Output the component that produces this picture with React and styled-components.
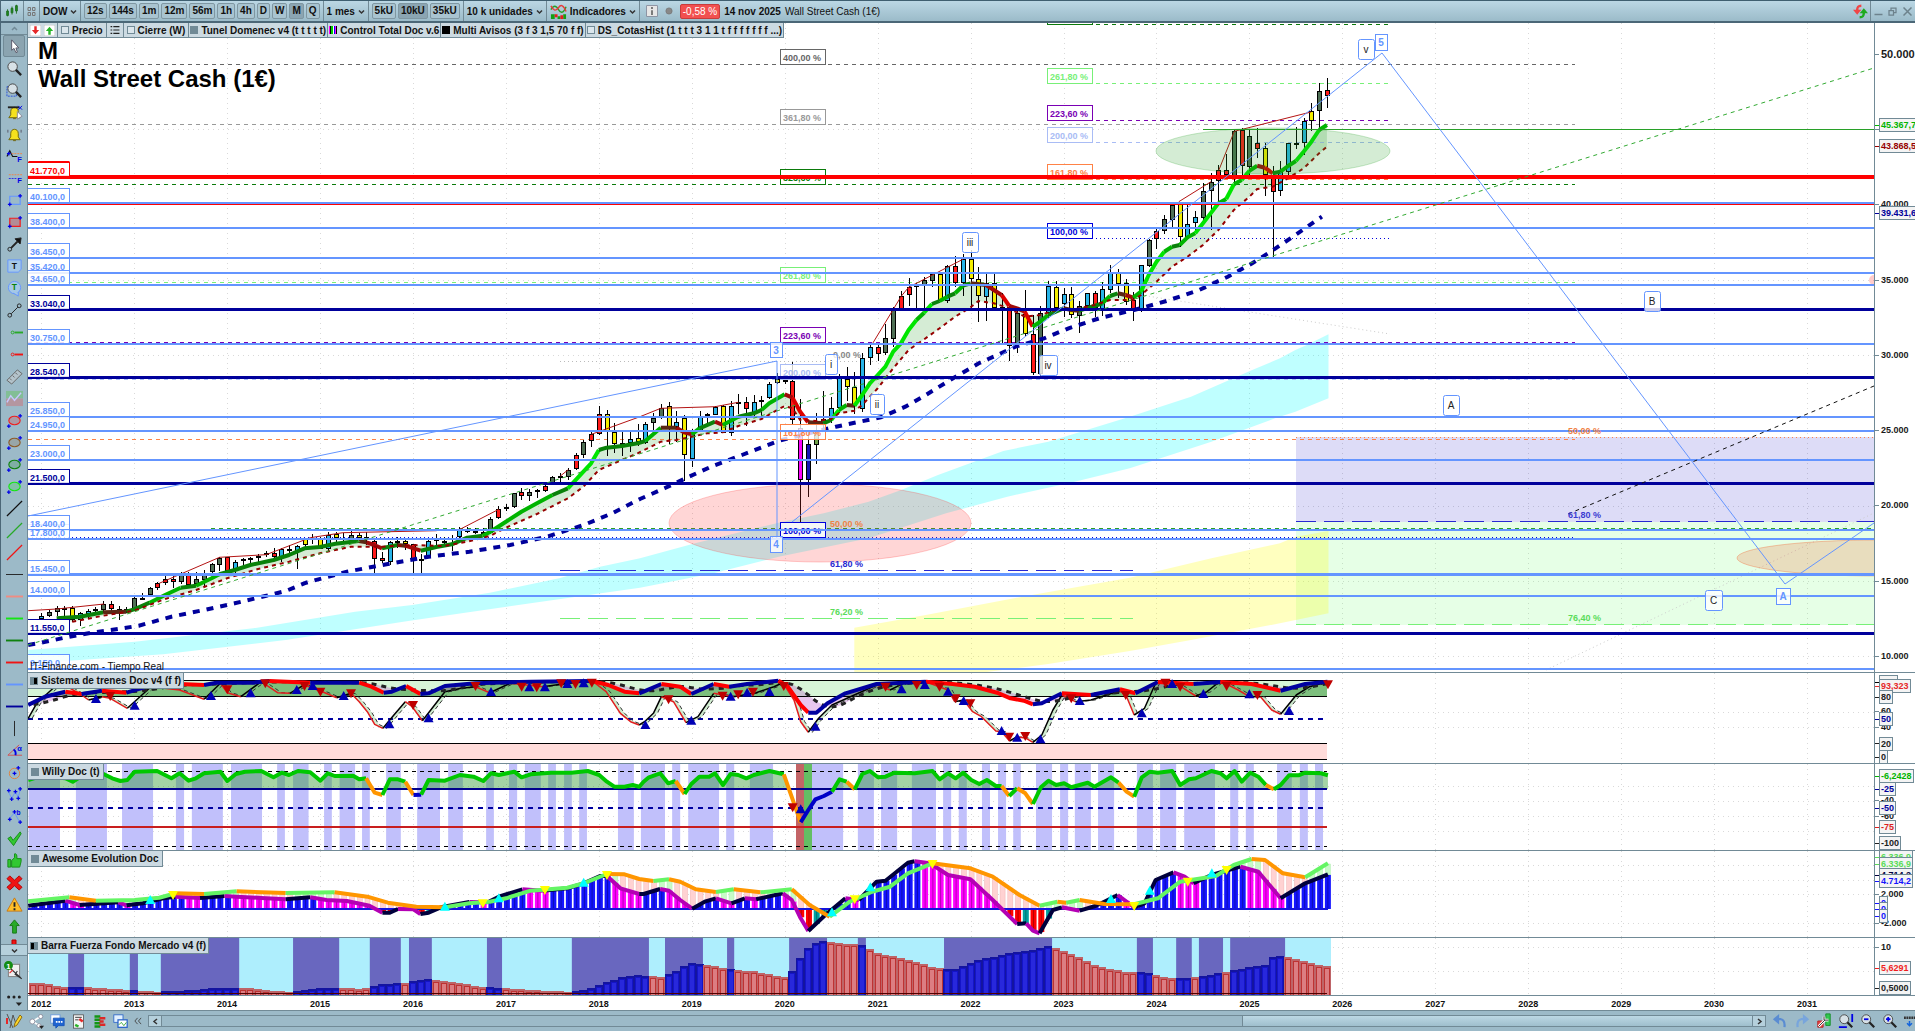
import React from "react";
import styled, { createGlobalStyle } from "styled-components";

const GlobalStyle = createGlobalStyle`
  * {
    box-sizing: border-box;
  }
  body {
    margin: 0;
    overflow: hidden;
    background: #9cbac8;
    font-family: "Liberation Sans", Arial, sans-serif;
    font-size: 10px;
    color: #111;
  }
  button, select {
    font: inherit;
    color: inherit;
    cursor: pointer;
  }
`;

const BLUE = "#6495ff";
const NAVY = "#00009b";
const EDGE = "#718a96";

/* ---------- layout ---------- */

const Page = styled.div`
  display: flex;
  flex-direction: column;
  height: 100vh;
  border-left: 1px solid #4b6777;
`;

const TopBar = styled.header`
  display: flex;
  align-items: stretch;
  height: 23px;
  flex: none;
  border-top: 1px solid #3f5f70;
  border-bottom: 2px solid #4b6777;
  background: linear-gradient(#bbd7e4, #9bbbc9);
`;

const Group = styled.div`
  display: flex;
  align-items: center;
  gap: ${(p) => p.$gap || 0}px;
  padding: 0 ${(p) => p.$pad || 3}px;
  border-right: 1px solid ${EDGE};
  white-space: nowrap;
`;

const Spacer = styled.div`
  flex: 1;
`;

const ToolButton = styled.button`
  height: 16px;
  padding: 0 2px;
  border: 1px solid #7f97a2;
  border-radius: 2px;
  background: ${(p) => (p.$active ? "#8ba5b2" : "#a9c4d0")};
  font-weight: bold;
  line-height: 12px;
`;

const Picker = styled.label`
  display: flex;
  align-items: center;
  gap: 2px;

  select {
    appearance: none;
    border: 0;
    padding: 0;
    background: none;
    font-weight: bold;
  }
`;

const Badge = styled.span`
  padding: 1px 2px;
  border: 1px solid #c83c3c;
  border-radius: 2px;
  background: #f25050;
  color: #fff;
`;

const Info = styled.div`
  display: flex;
  align-items: center;
  gap: 4px;
  padding-left: 6px;
  white-space: nowrap;
`;

const WindowButtons = styled.div`
  display: flex;
  align-items: center;
  justify-content: space-around;
  width: 44px;
`;

const Bare = styled.button`
  display: flex;
  align-items: center;
  justify-content: center;
  padding: 0;
  border: 0;
  background: none;
`;

const Body = styled.div`
  display: flex;
  flex: 1;
  min-height: 0;
`;

const Side = styled.nav`
  display: flex;
  flex-direction: column;
  width: 27px;
  flex: none;
  border-right: 1px solid ${EDGE};
  background: #9cbac8;
`;

const SideTools = styled.div`
  flex: 1;
  min-height: 0;
  overflow: hidden;
`;

const SideButton = styled(Bare)`
  width: 22px;
  height: 22px;
  margin-left: 2px;
  border: 1px solid ${(p) => (p.$active ? "#718a96" : "transparent")};
  border-radius: 2px;
  background: ${(p) => (p.$active ? "#8ba4b0" : "none")};
`;

const SideArrow = styled(Bare)`
  width: 100%;
  height: 12px;
  flex: none;
  border-bottom: 1px solid ${EDGE};
  border-top: ${(p) => (p.$lower ? `1px solid ${EDGE}` : 0)};
  background: ${(p) => (p.$lower ? "#b5d0dc" : "none")};
`;

const SideFoot = styled.div`
  display: flex;
  flex-direction: column;
  align-items: center;
  justify-content: space-around;
  height: 54px;
`;

const Charts = styled.main`
  display: grid;
  grid-template-rows: 650fr 91fr 87fr 87fr 58fr 14px;
  flex: 1;
  min-width: 0;
  background: #fff;
`;

const Panel = styled.section`
  position: relative;
  display: grid;
  grid-template-columns: minmax(0, 1fr) 41px;
  min-height: 0;
  border-bottom: 1px solid ${EDGE};
`;

const Plot = styled.svg`
  display: block;
  width: 100%;
  height: 100%;
  min-height: 0;
  font-family: "Liberation Sans", Arial, sans-serif;
`;

const Legend = styled.div`
  position: absolute;
  top: 0;
  left: 0;
  display: flex;
  height: ${(p) => p.$height || 15}px;
`;

const LegendTab = styled.button`
  display: flex;
  align-items: center;
  gap: 3px;
  padding: 0 ${(p) => p.$pad || 1}px;
  border: 1px solid ${EDGE};
  border-width: 0 1px 1px 0;
  background: #ccdae2;
  font-weight: bold;
  white-space: nowrap;
`;

const Swatch = styled.span`
  width: 8px;
  height: 8px;
  border: 1px solid ${(p) => p.$edge || "#718a96"};
  background: ${(p) => p.$fill || "#dbe6ec"};
`;

const Title = styled.h1`
  position: absolute;
  top: 14px;
  left: 10px;
  margin: 0;
  font-size: 24px;
  line-height: 28px;
  color: #000;
`;

const Credit = styled.p`
  position: absolute;
  left: 2px;
  bottom: -1px;
  margin: 0;
  line-height: 12px;
`;

const Axis = styled.div`
  position: relative;
  overflow: hidden;
  border-left: 1px solid ${EDGE};
`;

const Tick = styled.span`
  position: absolute;
  left: 0;
  display: flex;
  align-items: center;
  height: 14px;
  margin-top: -7px;
  font-size: ${(p) => (p.$big ? 11 : 9)}px;
  font-weight: bold;
  white-space: nowrap;
  color: ${(p) => p.$color || "#1a1a1a"};

  &::before {
    width: 4px;
    height: 1px;
    background: ${(p) => p.$color || EDGE};
    content: "";
  }

  span {
    padding: 0 1px;
    line-height: 12px;
    border: 1px solid ${(p) => (p.$boxed ? EDGE : "transparent")};
    background: ${(p) => (p.$boxed ? "#f4f4f4" : "none")};
  }
`;

const Years = styled.div`
  position: relative;
  margin-right: 41px;
  font-size: 9px;
  font-weight: bold;

  span {
    position: absolute;
    top: 3px;
    transform: translateX(-50%);
  }
`;

const BottomBar = styled.footer`
  display: flex;
  align-items: center;
  gap: 6px;
  height: 21px;
  flex: none;
  padding: 0 0 0 4px;
  border-top: 1px solid ${EDGE};
  background: #9cbac8;
`;

const Scroller = styled.div`
  display: flex;
  flex: 1;
  height: 12px;
  border: 1px solid ${EDGE};

  button {
    width: 12px;
    background: #b5d0dc;
  }
`;

const Track = styled.div`
  flex: 1081;
  border-left: 1px solid ${EDGE};
`;

const Thumb = styled.div`
  flex: 510;
  border: 1px solid ${EDGE};
  border-width: 0 1px;
  background: linear-gradient(#bcd8e4, #9fbfcd);
`;

/* ---------- scales ---------- */

const MONTH = 7.745;
const monthX = (m) => 41.2 + MONTH * m;
const priceY = (v) => 656.3 - (v - 10000) * 0.01506;
const place = (ox, kx, oy) => (list) =>
  list.map(([x, y]) => [ox + x / kx, oy + y / 3]);

const topMid = place(640, 2.45, 0);
const topEnd = place(1275, 2.45, 0);
const lowStart = place(0, 2.45, 345);
const lowMid = place(640, 2.45, 345);
const lowEnd = place(1275, 2.45, 345);
const indA = place(0, 2.45, 670);
const indB = place(640, 2.24, 670);
const byMonth = (oy) => (list) =>
  list.map(([m, y]) => [monthX(m), oy + y / 3]);
const early = byMonth(345);
const late = byMonth(0);

const d = (pts) =>
  pts.map(([x, y], i) => `${i ? "L" : "M"}${x.toFixed(1)} ${y.toFixed(1)}`).join("");

const valueAt = (pts, x) => {
  for (let i = 1; i < pts.length; i++) {
    if (x <= pts[i][0]) {
      const [x0, y0] = pts[i - 1];
      const [x1, y1] = pts[i];
      return x1 === x0 ? y1 : y0 + ((y1 - y0) * (x - x0)) / (x1 - x0);
    }
  }
  return pts[pts.length - 1][1];
};

/* ---------- price data: colour, body top, body bottom, high, low ---------- */

const FILL = {
  c: "#28b4e8",
  g: "#4f6f55",
  r: "#ff1a1a",
  y: "#f5ee00",
  k: "#111",
  m: "#ff00ff",
  n: "#1414b4",
  l: "#6fa04a",
};

const EARLY = `c812,820,805,822 g802,815,795,817 g790,803,783,812 k790,792,783,815 y790,826,783,832
c805,827,800,842 c798,806,792,820 c793,800,786,808 g778,795,768,803 r778,793,768,797
k793,796,783,825 k793,795,785,805 g760,794,757,796 g758,761,743,765 g728,750,726,755
r714,728,710,735 r703,716,685,720 r703,713,693,728 g688,713,680,716 r688,720,680,720
g703,718,680,722 g683,704,675,722 g658,683,653,685 g638,658,635,677 r636,678,636,680
c650,678,645,690 c643,650,638,670 c638,644,635,660 g632,638,628,650 r625,632,618,635
r625,638,610,640 c613,638,608,650 c612,615,600,625 c602,616,600,672 y583,602,580,605
k580,582,568,597 y582,612,575,613 c570,611,562,618 y568,580,560,590 k578,580,565,592
g570,583,558,592 y570,580,565,590 k576,580,562,600 r587,640,585,683 r640,650,622,655
c590,650,588,660 c588,592,575,610 y588,598,583,615 r598,642,597,683 k641,643,628,683
c587,638,583,640 y583,588,566,600 k588,590,575,602 k578,580,570,617 c553,578,545,582
k556,558,545,565 k558,562,548,568 y560,565,550,575 g523,565,517,567 r493,520,483,522
k486,488,478,497 g445,487,443,490 r440,452,430,465 g440,452,433,468 k436,438,432,458
r422,437,418,440 g397,415,393,418 k393,395,383,410 g374,394,370,405 r331,373,325,375
g290,328,285,340 r268,290,262,305 r206,265,183,270 y208,258,195,332 y262,298,235,325
y295,297,260,332 c283,295,255,322 y278,290,238,303 c238,296,230,298 g220,236,205,255
g190,217,178,222 y184,248,170,297 c232,248,198,290 y220,332,210,407 c258,343,252,365
c217,258,198,262 k208,212,205,240 c185,208,183,210 y183,265,180,265 c184,265,168,272
k172,174,148,208 r172,194,157,243 c170,203,150,212 k164,168,153,223 c118,160,112,162
y103,115,85,118 y105,110,90,117 r108,226,50,240 m250,406,162,530 n298,406,258,456
l260,298,205,357 c222,240,138,255 c190,223,157,235 c100,190,88,205 y103,127,67,167
y127,185,80,207 c38,190,25,200 c5,38,-5,60 r5,26,-2,48`;

const LATE = `g1015,1060,972,1065 g930,1017,920,1042 r889,930,873,930 r862,886,835,917 k853,862,850,925
g841,860,832,925 g822,842,815,860 y822,903,815,905 c798,902,795,908 r798,850,768,862
c778,850,762,887 y778,838,750,925 y838,890,800,965 c848,890,822,963 y848,923,822,930
k920,926,880,1030 r922,1040,918,1082 g940,1036,925,1060 y942,1003,870,1008 r1003,1120,945,1125
g938,1122,918,1127 c857,937,843,955 y860,923,843,927 c883,913,865,950 y883,946,862,955
g917,948,903,1000 c880,918,878,930 r880,925,873,950 c868,935,845,948 c815,868,795,880
y815,850,808,893 y850,907,838,915 r900,930,875,963 c796,930,795,935 g720,797,717,800
r693,718,680,747 g658,695,645,703 g614,658,610,683 y613,712,610,742 c673,714,615,718
c652,670,632,700 g572,653,550,660 g545,573,520,690 r511,545,495,617 r511,525,462,532
g394,530,388,545 r391,500,384,530 g409,502,388,530 r428,445,385,475 y445,527,430,587
r525,575,498,770 c514,575,483,588 c430,518,430,525 k430,432,382,446 c364,430,354,465
y334,364,309,392 g274,334,249,384 r271,289,234,323`;

const readCandles = (text, start, oy) =>
  text.split(/\s+/).map((item, i) => {
    const [top, bottom, high, low] = item
      .slice(1)
      .split(",")
      .map((n) => oy + Number(n) / 3);
    return { x: Math.round(monthX(start + i)), fill: FILL[item[0]], top, bottom, high, low };
  });

const candles = [...readCandles(EARLY, 0, 345), ...readCandles(LATE, 109, 0)];

const fastAvg = [
  ...early([
    [2, 820], [4, 817], [5, 815], [8, 802], [11, 800], [12, 793], [14, 773], [16, 750], [18, 728],
    [20, 722], [22, 700], [23, 688], [25, 675], [27, 660], [30, 645], [32, 630], [34, 610], [36, 606],
    [38, 596], [41, 588], [42, 592], [43, 600], [44, 610], [46, 600], [47, 602], [49, 617], [51, 606],
    [53, 598], [55, 578], [57, 572], [58, 560], [60, 530], [62, 500], [64, 475], [66, 450], [68, 430],
    [70, 380], [71, 355], [72, 315], [73, 308], [75, 303], [77, 295], [78, 288], [80, 248], [82, 248],
    [83, 262], [84, 268], [85, 250], [87, 230], [88, 240], [90, 215], [92, 205], [93, 195], [94, 175],
    [96, 148], [97, 158], [98, 200], [99, 232], [101, 235], [102, 225], [103, 195], [104, 180],
    [105, 182], [106, 150], [107, 115], [108, 90], [109, 65], [110, 20],
  ]),
  ...late([
    [111, 1030], [112, 990], [113, 960], [114, 938], [115, 912], [116, 903], [117, 890], [118, 880],
    [119, 857], [120, 850], [122, 855], [123, 870], [124, 885], [125, 918], [126, 925], [127, 935],
    [128, 980], [129, 965], [130, 945], [131, 935], [132, 925], [133, 930], [134, 932], [136, 918],
    [137, 910], [138, 888], [139, 880], [140, 885], [141, 893], [142, 875], [143, 825], [144, 785],
    [145, 755], [146, 740], [147, 735], [148, 712], [149, 700], [150, 670], [151, 640], [152, 610],
    [153, 597], [154, 553], [155, 540], [156, 512], [157, 497], [158, 503], [159, 520], [160, 515],
    [161, 498], [162, 483], [163, 455], [164, 425], [165, 390], [166, 375],
  ]),
];

const slowAvg = [
  ...early([
    [4, 830], [8, 812], [12, 797], [16, 762], [20, 735], [24, 700], [28, 672], [32, 650], [36, 625],
    [40, 605], [44, 605], [48, 600], [52, 603], [55, 590], [58, 572], [60, 548], [64, 507], [68, 460],
    [70, 425], [72, 375], [74, 355], [77, 325], [80, 290], [82, 285], [84, 275], [86, 265], [88, 262],
    [90, 243], [93, 222], [95, 195], [96, 183], [97, 190], [98, 225], [100, 228], [102, 222],
    [103, 205], [105, 197], [106, 180], [108, 130], [110, 70], [112, 15],
  ]),
  ...late([
    [114, 1018], [116, 985], [118, 950], [120, 922], [121, 903], [123, 910], [125, 925], [127, 950],
    [129, 945], [131, 930], [133, 930], [136, 915], [138, 900], [141, 900], [142, 885], [144, 845],
    [146, 800], [148, 770], [150, 735], [152, 690], [154, 630], [156, 590], [157, 567], [159, 560],
    [161, 535], [163, 505], [165, 460], [166, 440],
  ]),
];

const longAvg = [
  ...lowStart([
    [69, 900], [101, 893], [170, 875], [230, 862], [290, 852], [340, 842], [420, 815], [500, 795],
    [575, 775], [650, 753], [700, 738], [750, 713], [850, 680], [950, 657], [1050, 635], [1150, 620],
    [1250, 600], [1340, 575], [1430, 540], [1500, 505], [1568, 462],
  ]),
  ...lowMid([
    [60, 430], [120, 395], [180, 362], [250, 330], [340, 287], [480, 245], [590, 217], [650, 185],
    [700, 150], [760, 105], [830, 55], [920, 5],
  ]),
  ...topMid([
    [990, 1015], [1050, 985], [1130, 953], [1210, 930], [1290, 903], [1370, 870], [1440, 830],
    [1500, 790], [1551, 750],
  ]),
  ...topEnd([[50, 705], [115, 650]]),
];

const cyanBand = [
  ...lowStart([
    [69, 915], [330, 890], [620, 850], [870, 800], [1010, 780], [1200, 743], [1370, 700], [1470, 665],
    [1568, 640],
  ]),
  ...lowMid([
    [135, 595], [350, 530], [450, 505], [560, 470], [640, 435], [730, 390], [890, 318], [1000, 290],
    [1200, 215], [1350, 155], [1500, 75], [1568, 40],
  ]),
  ...lowEnd([[50, 15], [78, 0], [131, -32], [131, 160], [50, 200], [0, 220]]),
  ...lowMid([
    [1400, 290], [1200, 370], [1050, 415], [900, 455], [750, 505], [560, 580], [340, 635], [180, 685],
    [0, 728],
  ]),
  ...lowStart([[1300, 775], [1000, 828], [700, 885], [400, 928], [160, 948], [69, 960]]),
];

const yellowBand = [
  ...lowMid([[525, 848], [700, 810], [960, 750], [1200, 698], [1400, 640], [1568, 595]]),
  ...lowEnd([[50, 575], [131, 558], [131, 805], [0, 838]]),
  ...lowMid([[1350, 885], [1200, 918], [1000, 957], [850, 981], [525, 981]]),
];

const swings = [
  lowStart([[69, 797], [139, 792], [255, 777]]),
  lowStart([[390, 715], [538, 637], [652, 629], [760, 578], [840, 563], [1070, 557]]),
  lowStart([[1127, 553], [1222, 493]]),
  lowStart([[1373, 393], [1392, 374]]),
  [...lowStart([[1449, 268], [1568, 215]]), ...lowMid([[51, 190], [184, 185], [241, 172]])],
  topMid([[570, 1030], [640, 889], [658, 862], [791, 778]]),
  topMid([[1320, 605], [1399, 545]]),
  [...topMid([[1418, 511], [1456, 394]]), [1311, 112]],
];

const LEVELS = [
  ["41.770,0", 177, "#ff0000", 4],
  ["40.100,0", 203, BLUE, 2],
  ["38.400,0", 228, BLUE, 2],
  ["36.450,0", 258, BLUE, 2],
  ["35.420,0", 273, BLUE, 2],
  ["34.650,0", 285, BLUE, 2],
  ["33.040,0", 309.5, NAVY, 3],
  ["30.750,0", 344, BLUE, 2],
  ["28.540,0", 377.5, NAVY, 3],
  ["25.850,0", 417, BLUE, 2],
  ["24.950,0", 431, BLUE, 2],
  ["23.000,0", 460, BLUE, 2],
  ["21.500,0", 483.5, NAVY, 3],
  ["17.800,0", 539, BLUE, 2],
  ["18.400,0", 530, BLUE, 2],
  ["15.450,0", 574.5, BLUE, 3],
  ["14.000,0", 596, BLUE, 2],
  ["11.550,0", 633.5, NAVY, 3],
  ["9.150,0", 669, BLUE, 2],
];

const FIBS_A = [
  ["400,00 %", 64.5, "#666"],
  ["361,80 %", 124.5, "#999"],
  ["323,60 %", 184.5, "#0a7a0a"],
  ["261,80 %", 282.5, "#78f078"],
  ["223,60 %", 342.5, "#7a00b4"],
  ["200,00 %", 379.5, "#a9bcf5"],
  ["161,80 %", 439.5, "#ff8246"],
  ["100,00 %", 537.5, "#0000dc"],
];

const FIBS_B = [
  ["", 24.5, "#0a7a0a"],
  ["261,80 %", 83.5, "#78f078"],
  ["223,60 %", 120.5, "#7a00b4"],
  ["200,00 %", 142.5, "#a9bcf5"],
  ["161,80 %", 179.5, "#ff8246"],
  ["100,00 %", 238.5, "#0000dc"],
];

const YEARS = Array.from({ length: 20 }, (_, i) => 2012 + i);
const yearX = (year) => monthX((year - 2012) * 12);

/* ---------- drawing helpers ---------- */

const HLine = ({ x1 = 28, x2 = 1874, y, color, width = 1, dash }) => (
  <path
    d={`M${x1} ${y}H${x2}`}
    stroke={color}
    strokeWidth={width}
    strokeDasharray={dash}
    shapeRendering="crispEdges"
  />
);

const Grid = ({ top, bottom, rows }) => (
  <g stroke="#d9d9d9" strokeDasharray="1 4" shapeRendering="crispEdges">
    {YEARS.map((year) => (
      <path key={year} d={`M${Math.round(yearX(year)) + 0.5} ${top}V${bottom}`} />
    ))}
    {rows.map((y) => (
      <path key={y} d={`M28 ${Math.round(y) + 0.5}H1874`} />
    ))}
  </g>
);

const Segments = ({ points, width, colorOf }) => {
  const runs = [];
  for (let i = 1; i < points.length; i++) {
    const color = colorOf(points[i - 1], points[i]);
    const last = runs[runs.length - 1];
    if (last && last.color === color) last.pts.push(points[i]);
    else runs.push({ color, pts: [points[i - 1], points[i]] });
  }
  return runs.map((run, i) => (
    <path
      key={i}
      d={d(run.pts)}
      fill="none"
      stroke={run.color}
      strokeWidth={width}
      strokeLinejoin="round"
    />
  ));
};

const Tag = ({ x, y, text, color, width = 46 }) => (
  <g>
    <rect
      x={x + 0.5}
      y={y - 15}
      width={width - 1}
      height="15"
      fill="#fff"
      fillOpacity=".8"
      stroke={color}
    />
    <text x={x + 3} y={y - 4} fontSize="9" fontWeight="bold" fill={color}>
      {text}
    </text>
  </g>
);

const Wave = ({ x, y, w = 16, h = 20, text, square }) => (
  <g>
    <rect
      x={x + 0.5}
      y={y + 0.5}
      width={w}
      height={h}
      rx={square ? 0 : 2}
      fill="#fff"
      fillOpacity=".8"
      stroke={BLUE}
    />
    <text
      x={x + w / 2}
      y={y + h / 2 + 4}
      textAnchor="middle"
      fontSize="10"
      fontWeight={square ? "bold" : "normal"}
      fill={square ? BLUE : "#222"}
    >
      {text}
    </text>
  </g>
);

const Marks = ({ points, up, color, size = 5 }) =>
  points.map(([x, y], i) => (
    <path
      key={i}
      d={
        up
          ? `M${x - size} ${y + size - 1}h${size * 2}l${-size} ${-size * 1.8}z`
          : `M${x - size} ${y - size + 1}h${size * 2}l${-size} ${size * 1.8}z`
      }
      fill={color}
    />
  ));

/* ---------- price panel ---------- */

const avgColor = ([x0, y0], [x1, y1]) => {
  const slope = (y0 - y1) / (x1 - x0);
  if (slope > 1) return "#00e600";
  if (slope > 0.45) return "#00b400";
  if (slope > 0.05) return "#0a820a";
  if (slope > -0.25) return "#5a2814";
  if (slope > -0.7) return "#a00a0a";
  return "#dc0000";
};

const PriceChart = () => (
  <Plot viewBox="28 23 1846 649" preserveAspectRatio="none" role="img" aria-label="Wall Street Cash">
    <Grid
      top={23}
      bottom={672}
      rows={[10, 15, 20, 25, 30, 35, 40, 45].map((v) => priceY(v * 1000))}
    />
    <rect x="1296" y="437" width="578" height="85" fill="#1e14c8" fillOpacity=".15" />
    <rect x="1296" y="522" width="578" height="103" fill="#64ff64" fillOpacity=".16" />
    <path d={`${d(yellowBand)}Z`} fill="#ffff00" fillOpacity=".25" />
    <path d={`${d(cyanBand)}Z`} fill="#00ffff" fillOpacity=".25" />
    <path d={`${d([...fastAvg, ...slowAvg.slice().reverse()])}Z`} fill="#2ca02c" fillOpacity=".2" />

    <HLine y={361.5} x1={560} x2={1133} color="#bbb" dash="1 3" />
    <HLine y={570.5} x1={560} x2={1133} color="#2828d2" dash="20 8" />
    <HLine y={618.5} x1={560} x2={1133} color="#78f078" dash="20 8" />
    <HLine y={528.5} x1={211} color="#28a028" dash="4 4" />
    <HLine y={437.5} x1={1296} color="#ff8246" dash="1 3" />
    <HLine y={521.5} x1={1296} color="#2828d2" dash="20 8" />
    <HLine y={624.5} x1={1296} color="#78f078" dash="20 8" />
    {FIBS_A.map(([text, y, color]) => (
      <HLine key={text} y={y} x2={1575} color={color} dash={y === 537.5 ? "1 3" : "4 4"} />
    ))}
    {FIBS_B.map(([text, y, color]) => (
      <HLine key={y} y={y} x1={1096} x2={1389} color={color} dash={y === 238.5 ? "1 3" : "4 4"} />
    ))}
    <path d="M1141 295L1390 334M1546 670L1874 513" stroke="#ccc" strokeDasharray="1 3" />

    {candles.map((c) => (
      <g key={c.x} shapeRendering="crispEdges">
        <path d={`M${c.x + 0.5} ${c.high}V${c.low}`} stroke="#000" />
        <rect
          x={c.x - 1.5}
          y={Math.round(c.top) + 0.5}
          width="4"
          height={Math.max(0.5, Math.round(c.bottom - c.top) - 1)}
          fill={c.fill}
          stroke="#000"
        />
      </g>
    ))}
    <Segments points={fastAvg} width={4} colorOf={avgColor} />
    <path d={d(slowAvg)} fill="none" stroke="#960000" strokeWidth="2" strokeDasharray="4 4" />
    <path d={d(longAvg)} fill="none" stroke={NAVY} strokeWidth="4" strokeDasharray="7 7" />
    {swings.map((pts, i) => (
      <path key={i} d={d(pts)} fill="none" stroke="#b41414" />
    ))}

    <ellipse cx="820" cy="523" rx="151" ry="39" fill="#ff3232" fillOpacity=".2" stroke="#ff3232" strokeOpacity=".25" />
    <ellipse cx="1273" cy="151" rx="117" ry="23" fill="#28a028" fillOpacity=".2" stroke="#28a028" strokeOpacity=".25" />
    <ellipse cx="1877" cy="558" rx="140" ry="18" fill="#f06432" fillOpacity=".22" stroke="#f06432" strokeOpacity=".35" />
    <circle cx="1874" cy="280" r="5" fill="#ff3232" fillOpacity=".25" />

    {FIBS_A.map(([text, y, color]) => (
      <Tag key={text} x={780} y={y} text={text} color={color} />
    ))}
    {FIBS_B.map(([text, y, color]) => (
      <Tag key={y} x={1047} y={y} text={text} color={color} />
    ))}

    <HLine y={204.5} color="#ff0000" />
    {LEVELS.map(([text, y, color, width]) => (
      <HLine key={text} y={y} color={color} width={width} />
    ))}
    <HLine y={129.5} x1={1203} color="#28a028" />
    {LEVELS.map(([text, y, color]) => (
      <g key={text}>
        <rect x="27.5" y={Math.round(y) - 14.5} width="42" height="14" fill="#fff" fillOpacity=".85" stroke={color} />
        <text x="30" y={Math.round(y) - 3} fontSize="9" fontWeight="bold" fill={color}>
          {text}
        </text>
      </g>
    ))}
    <path d="M28.5 161.5H69.5" stroke="#f00" />

    <g fill="none" stroke={BLUE}>
      <path d="M28 516L777 361V540" />
      <path d="M792 522L1382 53L1785 584L1874 523" />
    </g>
    <path d="M28 645L1874 68" stroke="#32aa32" strokeDasharray="4 4" />
    <path d="M1568 514L1874 386" stroke="#111" strokeDasharray="4 4" />

    <g fontSize="9" fontWeight="bold">
      <text x="833" y="358" fill="#888">0,00 %</text>
      <text x="830" y="527" fill="#f08246">50,00 %</text>
      <text x="830" y="567" fill="#2828d2">61,80 %</text>
      <text x="830" y="615" fill="#5adc5a">76,20 %</text>
      <text x="1568" y="434" fill="#f08246">50,00 %</text>
      <text x="1568" y="518" fill="#3c3cd2">61,80 %</text>
      <text x="1568" y="621" fill="#5adc5a">76,40 %</text>
    </g>

    <Wave x={770} y={342} w={12} h={15} text="3" square />
    <Wave x={770} y={536} w={12} h={16} text="4" square />
    <Wave x={1375} y={34} w={12} h={16} text="5" square />
    <Wave x={1776} y={588} w={14} h={16} text="A" square />
    <Wave x={962} y={232} text="iii" />
    <Wave x={825} y={354} w={12} text="i" />
    <Wave x={870} y={394} w={14} text="ii" />
    <Wave x={1039} y={355} w={18} text="iv" />
    <Wave x={1358} y={39} text="v" />
    <Wave x={1644} y={291} text="B" />
    <Wave x={1443} y={395} text="A" />
    <Wave x={1705} y={590} w={17} text="C" />
  </Plot>
);

/* ---------- Sistema de trenes ---------- */

const trainFast = [
  ...indA([
    [69, 145], [90, 100], [130, 55], [165, 50], [200, 75], [217, 90], [250, 80], [270, 85], [312, 115],
    [370, 50], [440, 60], [500, 88], [540, 40], [557, 68], [590, 80], [640, 35], [680, 68], [710, 70],
    [745, 45], [790, 65], [825, 83], [860, 70], [880, 95], [900, 125], [918, 163], [938, 175],
    [965, 135], [993, 95], [1010, 110], [1035, 152], [1090, 65], [1130, 55], [1165, 50], [1200, 68],
    [1250, 40], [1330, 50], [1400, 38], [1450, 32], [1485, 65], [1520, 130], [1545, 155], [1566, 165],
  ]),
  ...indB([
    [10, 155], [30, 130], [48, 80], [75, 95], [103, 158], [130, 140], [165, 70], [210, 80], [260, 68],
    [300, 50], [320, 38], [345, 90], [360, 155], [377, 187], [400, 145], [430, 105], [480, 75],
    [530, 45], [560, 60], [590, 40], [640, 35], [690, 60], [705, 95], [725, 90], [745, 125],
    [765, 140], [797, 183], [810, 185], [828, 213], [845, 200], [865, 205], [880, 217], [900, 195],
    [925, 120], [945, 75], [975, 95], [1010, 90], [1075, 62], [1090, 80], [1107, 135], [1130, 115],
    [1155, 40], [1200, 40], [1245, 78], [1270, 65], [1300, 33], [1340, 60], [1365, 80], [1390, 80],
    [1415, 120], [1435, 133], [1470, 75], [1500, 50], [1540, 35],
  ]),
];

const trainSlow = [
  ...indA([
    [69, 105], [110, 80], [160, 65], [200, 72], [250, 62], [310, 68], [360, 50], [440, 42], [500, 45],
    [530, 38], [620, 38], [660, 33], [760, 38], [880, 38], [910, 50], [940, 68], [960, 65], [995, 48],
    [1030, 72], [1050, 70], [1090, 48], [1165, 40], [1300, 35], [1450, 33], [1490, 45], [1530, 65],
    [1566, 70],
  ]),
  ...indB([
    [8, 65], [48, 42], [90, 50], [115, 72], [165, 42], [200, 50], [240, 42], [310, 32], [330, 48],
    [360, 105], [377, 128], [395, 128], [420, 100], [460, 70], [530, 42], [640, 35], [700, 42],
    [750, 50], [800, 68], [830, 85], [860, 92], [880, 103], [900, 100], [945, 70], [1010, 75],
    [1075, 58], [1110, 70], [1160, 36], [1240, 42], [1300, 36], [1370, 42], [1435, 62], [1490, 42],
    [1540, 35],
  ]),
];

const trainLag = Array.from({ length: 168 }, (_, i) => {
  const x = monthX(i - 1);
  const back = [0, 8, 16, 24, 32].map((s) => valueAt(trainSlow, Math.max(28, x - s)));
  return [x, back.reduce((a, b) => a + b, 0) / back.length];
});

const trainDown = [
  ...indA([
    [270, 78], [557, 58], [650, 40], [746, 48], [785, 65], [860, 70], [1012, 105], [1165, 48],
    [1278, 50], [1315, 52], [1375, 40], [1410, 42], [1450, 38],
  ]),
  ...indB([
    [64, 88], [185, 77], [220, 73], [253, 65], [322, 48], [550, 50], [620, 45], [671, 50], [707, 85],
    [740, 100], [827, 200], [863, 198], [966, 85], [1088, 75], [1177, 38], [1210, 50], [1314, 48],
    [1383, 75], [1541, 43],
  ]),
];

const trainUp = [
  ...indA([
    [235, 87], [330, 107], [517, 78], [614, 70], [727, 60], [766, 48], [842, 78], [954, 163],
    [1050, 145], [1203, 66], [1297, 52], [1335, 52], [1390, 42], [1430, 40],
  ]),
  ...indB([
    [12, 165], [115, 152], [203, 80], [240, 68], [290, 66], [393, 170], [586, 58], [638, 45],
    [690, 65], [725, 93], [810, 183], [845, 203], [897, 208], [985, 93], [1124, 130], [1192, 42],
    [1262, 72], [1365, 73], [1454, 123],
  ]),
];

const shift = (pts, dx) => pts.map(([x, y]) => [x + dx, y]);

const TrainChart = () => (
  <Plot viewBox="28 673 1846 90" preserveAspectRatio="none" role="img" aria-label="Sistema de trenes">
    <Grid top={673} bottom={763} rows={[712, 727]} />
    <defs>
      <clipPath id="train-band">
        <rect x="28" y="680" width="1299" height="16" />
      </clipPath>
    </defs>
    <rect x="28" y="680" width="1299" height="16" fill="#d7f5d7" />
    <path
      d={`${d(trainSlow)}L1327 696L28 696Z`}
      fill="#7dbf7d"
      clipPath="url(#train-band)"
    />
    <rect x="28" y="743" width="1299" height="16" fill="#ffdcda" />
    <path
      d={`${d([...trainSlow, ...trainLag.slice().reverse()])}Z`}
      fill="#b446c8"
      fillOpacity=".3"
    />
    <path
      d={`${d([...trainFast, ...shift(trainFast, 4).reverse()])}Z`}
      fill="#78c878"
      fillOpacity=".35"
    />
    <HLine y={680.5} x2={1327} color="#000" />
    <HLine y={696.5} x2={1327} color="#000" />
    <HLine y={719} x2={1327} color="#0000a0" width={2} dash="5 5" />
    <HLine y={743.5} x2={1327} color="#000" />
    <HLine y={759.5} x2={1327} color="#000" />
    <path d={d(shift(trainFast, 4))} fill="none" stroke="#333" strokeDasharray="4 3" />
    <Segments
      points={trainFast}
      width={1.5}
      colorOf={(a, b) => (b[1] > a[1] ? "#e11e1e" : "#000")}
    />
    <path d={d(trainLag)} fill="none" stroke="#222" strokeWidth="3" strokeDasharray="5 5" />
    <Segments
      points={trainSlow}
      width={4}
      colorOf={(a, b) => (b[1] > a[1] ? "#ff0000" : "#0000a0")}
    />
    <Marks points={trainDown} color="#be0000" />
    <Marks points={trainUp} color="#0000b4" up />
  </Plot>
);

/* ---------- Willy ---------- */

const spans = (ox, kx) => (list) => list.map(([a, b]) => [ox + a / kx, (b - a) / kx]);

const willyStripes = [
  ...spans(0, 2.45)([
    [70, 147], [186, 262], [299, 375], [431, 451], [470, 546], [566, 642], [679, 698], [718, 756],
    [794, 813], [832, 870], [887, 906], [946, 982], [1022, 1078], [1098, 1134], [1191, 1210],
    [1247, 1267], [1286, 1325], [1343, 1362], [1382, 1401], [1419, 1438], [1514, 1553],
  ]),
  ...spans(640, 2.24)([
    [2, 56], [72, 90], [108, 177], [193, 211], [246, 298], [385, 455], [488, 524], [540, 576],
    [609, 663], [679, 697], [714, 732], [766, 784], [802, 820], [836, 853], [887, 923], [941, 959],
    [974, 1010], [1026, 1062], [1113, 1149], [1165, 1201], [1219, 1288], [1322, 1340], [1357, 1375],
    [1427, 1460], [1478, 1496], [1512, 1530],
  ]),
];

const willy = [
  ...indA([
    [69, 330], [100, 318], [160, 325], [178, 335], [210, 310], [250, 310], [275, 325], [295, 333],
    [312, 330], [330, 305], [385, 303], [420, 325], [440, 310], [462, 332], [480, 325], [500, 310],
    [540, 305], [557, 333], [578, 312], [600, 305], [640, 303], [670, 322], [690, 308], [708, 315],
    [730, 303], [760, 307], [785, 332], [803, 310], [820, 318], [865, 317], [880, 328], [897, 325],
    [918, 368], [937, 375], [955, 328], [975, 328], [993, 335], [1013, 375], [1032, 374], [1050, 330],
    [1090, 332], [1127, 315], [1160, 320], [1184, 333], [1203, 310], [1222, 315], [1260, 305],
    [1278, 322], [1300, 313], [1350, 308], [1400, 308], [1440, 303], [1468, 315], [1487, 335],
    [1505, 350], [1530, 350], [1550, 345], [1566, 350],
  ]),
  ...indB([
    [8, 335], [20, 322], [45, 310], [63, 340], [80, 333], [100, 372], [115, 342], [133, 320],
    [155, 320], [168, 310], [186, 345], [203, 312], [220, 315], [238, 325], [255, 315], [290, 303],
    [322, 313], [345, 400], [360, 457], [377, 420], [393, 388], [412, 378], [430, 365], [447, 328],
    [463, 335], [481, 358], [498, 312], [515, 303], [533, 322], [550, 320], [570, 308], [615, 310],
    [655, 303], [671, 328], [690, 310], [707, 325], [724, 308], [742, 330], [760, 342], [777, 330],
    [797, 348], [810, 348], [827, 378], [845, 355], [863, 370], [880, 402], [898, 352], [915, 332],
    [932, 345], [950, 340], [966, 352], [1003, 338], [1018, 350], [1055, 322], [1072, 338],
    [1090, 365], [1107, 380], [1124, 322], [1142, 305], [1160, 308], [1192, 303], [1210, 345],
    [1230, 328], [1245, 325], [1280, 303], [1300, 310], [1314, 325], [1332, 303], [1348, 335],
    [1367, 308], [1385, 320], [1402, 345], [1420, 358], [1435, 345], [1454, 316], [1475, 316],
    [1490, 308], [1525, 310], [1541, 316],
  ]),
];

const willyColor = (a, b) => {
  if (b[1] > a[1] && b[1] > 788) return "#ff9600";
  if (b[1] <= a[1] && b[1] > 791) return "#0000c8";
  return "#00c800";
};

const WillyChart = () => (
  <Plot viewBox="28 764 1846 86" preserveAspectRatio="none" role="img" aria-label="Willy Doc">
    <Grid top={764} bottom={850} rows={[786, 801, 816, 831]} />
    <defs>
      <clipPath id="willy-upper">
        <rect x="28" y="764" width="1300" height="25" />
      </clipPath>
    </defs>
    {willyStripes.map(([x, w]) => (
      <rect key={x} x={x} y="764" width={w} height="86" fill="#c1c0fb" />
    ))}
    <rect x="796" y="764" width="8" height="86" fill="#c36466" />
    <rect x="804" y="764" width="8" height="86" fill="#64be64" />
    <path
      d={`${d(willy)}L1328 789L28 789Z`}
      fill="#289628"
      fillOpacity=".42"
      clipPath="url(#willy-upper)"
    />
    <HLine y={771.5} x2={1327} color="#000" dash="4 4" />
    <HLine y={808} x2={1327} color="#0000a0" width={2} dash="5 5" />
    <HLine y={846.5} x2={1327} color="#000" dash="4 4" />
    <HLine y={789} x2={1327} color="#00008c" width={2} />
    <HLine y={827} x2={1327} color="#c81e1e" width={2} />
    <Segments points={willy} width={4} colorOf={willyColor} />
    <Marks points={indB([[342, 412]])} color="#be0000" />
    <Marks points={indB([[360, 418]])} color="#0000b4" up />
  </Plot>
);

/* ---------- Awesome Evolution ---------- */

const awesomeFast = [
  ...indA([
    [69, 707], [160, 692], [195, 705], [290, 697], [310, 706], [350, 700], [400, 685], [430, 680],
    [490, 684], [550, 678], [580, 680], [640, 684], [700, 688], [760, 682], [800, 690], [850, 693],
    [905, 707], [937, 728], [955, 728], [975, 717], [1013, 718], [1030, 732], [1050, 728],
    [1080, 712], [1150, 696], [1195, 697], [1222, 680], [1280, 658], [1330, 662], [1390, 655],
    [1430, 640], [1470, 618], [1487, 618], [1520, 655], [1566, 672],
  ]),
  ...indB([
    [8, 672], [45, 657], [65, 662], [90, 690], [117, 716], [145, 695], [170, 685], [205, 700],
    [235, 685], [260, 688], [320, 670], [340, 690], [360, 745], [377, 783], [415, 735], [460, 685],
    [490, 690], [530, 635], [550, 632], [600, 578], [615, 574], [650, 580], [690, 615], [740, 628],
    [790, 690], [845, 762], [865, 760], [880, 782], [895, 790], [925, 720], [945, 712], [985, 722],
    [1020, 708], [1040, 695], [1070, 675], [1107, 712], [1130, 700], [1155, 630], [1195, 607],
    [1220, 620], [1240, 640], [1280, 615], [1345, 590], [1385, 605], [1435, 685], [1490, 640],
    [1541, 613],
  ]),
];

const awesomeSlow = [
  ...indA([
    [69, 694], [170, 682], [235, 692], [330, 690], [390, 683], [430, 670], [500, 672], [580, 664],
    [700, 669], [820, 667], [900, 680], [950, 698], [1020, 710], [1090, 712], [1150, 700],
    [1200, 695], [1240, 685], [1300, 662], [1390, 653], [1430, 640], [1487, 612], [1530, 613],
    [1566, 627],
  ]),
  ...indB([
    [30, 633], [65, 628], [90, 635], [125, 658], [170, 666], [210, 658], [270, 667], [340, 658],
    [380, 705], [425, 740], [470, 695], [520, 665], [560, 650], [600, 610], [655, 580], [740, 595],
    [790, 620], [850, 675], [895, 707], [935, 695], [955, 698], [985, 690], [1040, 702], [1107, 703],
    [1160, 685], [1210, 635], [1290, 618], [1330, 585], [1370, 567], [1400, 570], [1440, 610],
    [1490, 622], [1541, 580],
  ]),
];

const months = Array.from({ length: 168 }, (_, i) => i - 1);

const AwesomeChart = () => (
  <Plot viewBox="28 851 1846 86" preserveAspectRatio="none" role="img" aria-label="Awesome Evolution">
    <Grid top={851} bottom={937} rows={[865, 880, 894, 923]} />
    {months.map((m) => {
      const x = monthX(m);
      const y = valueAt(awesomeFast, x);
      const rising = y <= valueAt(awesomeFast, x - MONTH);
      const slow = valueAt(awesomeSlow, x);
      const slowUp = slow <= valueAt(awesomeSlow, x - MONTH);
      const below = y > 909;
      const fill = below ? (rising ? "#00a0a0" : "#ff0000") : rising ? "#1414ff" : "#ff00ff";
      return (
        <g key={m}>
          <rect x={x - 2} y={Math.min(y, 909)} width="6" height={Math.abs(909 - y)} fill={fill} />
          <rect x={x + 0.5} y={Math.min(y, 909)} width="1" height={Math.abs(909 - y)} fill="#000" fillOpacity=".3" />
          {slow < y && (
            <rect
              x={x - 1.5}
              y={slow}
              width="5"
              height={Math.max(0, Math.min(y, 909) - slow)}
              fill={slowUp ? "#c8fac8" : "#ffd2d2"}
              stroke={slowUp ? "#aaeeaa" : "#f0b4b4"}
              strokeWidth=".5"
            />
          )}
        </g>
      );
    })}
    <HLine y={909} x2={1328} color="#1414dc" width={2} />
    <Segments
      points={awesomeFast}
      width={4}
      colorOf={(a, b) => (b[1] > a[1] ? "#b400b4" : "#00003c")}
    />
    <Segments
      points={awesomeSlow}
      width={4}
      colorOf={(a, b) => (b[1] > a[1] ? "#ff9600" : "#64f564")}
    />
    <Marks
      points={[
        ...indA([[424, 675], [1183, 700], [1335, 660], [1487, 615]]),
        ...indB([[481, 688], [655, 582], [1107, 708], [1227, 635], [1314, 600]]),
      ]}
      color="#ffff00"
    />
    <Marks
      points={[
        ...indA([[368, 690], [1090, 710], [1222, 685], [1430, 638]]),
        ...indB([[430, 727], [516, 652], [1055, 687], [1142, 662], [1281, 610]]),
      ]}
      color="#00ffff"
      up
    />
  </Plot>
);

/* ---------- Barra Fuerza ---------- */

const forceZones = [
  ...spans(0, 2.45)([
    [167, 206], [318, 338], [394, 586], [718, 831], [906, 982], [1002, 1058], [1193, 1230],
    [1401, 1568],
  ]),
  ...spans(640, 2.24)([
    [0, 20], [56, 141], [195, 211], [334, 419], [488, 506], [681, 923], [1113, 1149], [1201, 1236],
    [1252, 1306], [1322, 1445],
  ]),
];

const force = [
  ...indA([
    [69, 940], [100, 938], [150, 950], [230, 953], [310, 960], [390, 965], [470, 960], [540, 953],
    [600, 953], [650, 960], [710, 965], [760, 957], [830, 952], [890, 958], [940, 942], [990, 938],
    [1050, 928], [1100, 935], [1180, 950], [1240, 955], [1330, 962], [1390, 965], [1440, 958],
    [1490, 935], [1530, 920], [1566, 916],
  ]),
  ...indB([
    [50, 920], [80, 905], [110, 880], [145, 882], [180, 893], [260, 905], [325, 922], [345, 900],
    [360, 860], [377, 832], [400, 813], [440, 818], [500, 825], [530, 848], [600, 868], [660, 893],
    [700, 900], [760, 870], [830, 848], [880, 840], [915, 827], [960, 848], [1020, 885], [1090, 908],
    [1130, 905], [1190, 925], [1245, 922], [1300, 908], [1350, 895], [1400, 885], [1420, 858],
    [1445, 858], [1490, 875], [1541, 890],
  ]),
];

const ForceChart = () => (
  <Plot viewBox="28 938 1846 57" preserveAspectRatio="none" role="img" aria-label="Barra Fuerza">
    <Grid top={938} bottom={995} rows={[947, 971]} />
    <rect x="29" y="938" width="1302" height="57" fill="#aeeefd" />
    {forceZones.map(([x, w]) => (
      <rect key={x} x={x} y="938" width={w} height="57" fill="#6967bf" />
    ))}
    {months.map((m) => {
      const x = monthX(m);
      const y = Math.round(valueAt(force, x));
      const strong = forceZones.some(([left, w]) => x >= left - 1 && x <= left + w);
      return (
        <g key={m} shapeRendering="crispEdges">
          <rect x={x - 4} y={y} width="8" height={995 - y} fill={strong ? "#1414a0" : "#be6468"} />
          <rect
            x={x - 2.5}
            y={y + 2.5}
            width="5"
            height={995 - y}
            fill={strong ? "#2828dc" : "#dc7d82"}
            stroke={strong ? "#1414c8" : "#be3232"}
          />
        </g>
      );
    })}
    <HLine y={993.5} x2={1327} color="#500000" />
  </Plot>
);

/* ---------- icons ---------- */

const Svg = ({ size = 18, children, ...rest }) => (
  <svg width={size} height={size} viewBox="0 0 18 18" fill="none" stroke="#222" {...rest}>
    {children}
  </svg>
);

const Chevron = ({ up, left, right, color = "#333" }) => (
  <svg width="7" height="7" viewBox="0 0 7 7" fill="none" stroke={color} strokeWidth="1.5">
    <path
      d={
        up ? "M1 5L3.500 2.500L6 5" : left ? "M5 1L2 3.500L5 6" : right ? "M2 1L5 3.500L2 6" : "M1 2.500L3.500 5L6 2.500"
      }
    />
  </svg>
);

const Lens = () => (
  <g>
    <circle cx="7" cy="7" r="5" fill="#d7e1e6" stroke="#444" />
    <path d="M10.500 10.500L16 16" stroke="#222" strokeWidth="2.500" />
  </g>
);
const Bell = () => (
  <path
    d="M3 14.500L5 11.500V8C5 5 7 3.500 9 3.500S13 5 13 8V11.500L15 14.500ZM7.500 15.500H10.500"
    fill="#f5e11e"
    stroke="#6e640a"
  />
);
const Plus = ({ x, y }) => (
  <path d={`M${x - 2} ${y}h4M${x} ${y - 2}v4`} stroke="#0000e6" strokeWidth="1.3" />
);
const Oval = ({ color }) => (
  <g>
    <ellipse cx="9" cy="9" rx="6" ry="4.500" stroke={color} strokeWidth="1.200" fill={color} fillOpacity=".2" />
    <Plus x={15} y={4} />
    <Plus x={3} y={15} />
  </g>
);
const Box = ({ color, fill = "none" }) => (
  <g>
    <path d="M4 4.500H15V13H4Z" stroke={color} fill={fill} strokeWidth="1.300" />
    <Plus x={15} y={4} />
    <Plus x={4} y={13} />
  </g>
);
const Slash = ({ color }) => <path d="M1 17L17 1" stroke={color} strokeWidth="1.300" />;
const Dash = ({ color, width = 2 }) => <path d="M0 9H18" stroke={color} strokeWidth={width} />;
const Glyph = ({ x, y, color, children, size = 9 }) => (
  <text x={x} y={y} fontSize={size} fontWeight="bold" fill={color} stroke="none">
    {children}
  </text>
);
const Ray = ({ color }) => (
  <g stroke={color}>
    <circle cx="7" cy="9" r="1.500" />
    <path d="M9 9H18" strokeWidth="2" />
  </g>
);

const SIDE_ICONS = [
  ["Cursor", <path d="M6 2V13L8.500 11L10.500 15.500L12 15L10.500 10.500H13.500Z" fill="#fff" stroke="#556" />],
  ["Zoom", <Lens />],
  ["Zoom zona", <g><path d="M1 5H11V15H1Z" stroke="#2850dc" strokeDasharray="2 1" /><Lens /></g>],
  ["Alerta rápida", <g><Bell /><path d="M2 3.500H14" stroke="#222" strokeWidth="2" /><path d="M13 2L17 6M17 2L13 6" stroke="#0000e6" /><path d="M12 8V16L17 13Z" fill="#fff" stroke="#889" /></g>],
  ["Alerta", <g><Bell /><path d="M2 4V7M16 4V7" stroke="#556" /></g>],
  ["Extensión", <g><path d="M1 9L4 3L7 9H12" stroke="#111" strokeWidth="1.200" /><path d="M6 6H17" stroke="#f08246" strokeDasharray="2 1" /><Plus x={3} y={6} /><Glyph x={12} y={15} color="#0000e6" size={8}>F</Glyph></g>],
  ["Fibonacci", <g><path d="M3 5H17" stroke="#f08246" strokeDasharray="2 1" /><path d="M3 9H12" stroke="#2828e6" strokeDasharray="2 1" /><Glyph x={12} y={14} color="#0000e6" size={8}>F</Glyph></g>],
  ["Rectángulo azul", <Box color={BLUE} />],
  ["Rectángulo rojo", <Box color="#f01e1e" fill="#b48c96" />],
  ["Flecha", <g><circle cx="4" cy="14" r="2" /><path d="M5.500 12.500L14 4" strokeWidth="2" /><path d="M16 2L9.500 3L15 8.500Z" fill="#111" /></g>],
  ["Texto", <g><path d="M2 2H16V12L13 15H2Z" fill="#a5c8e6" stroke={BLUE} /><Glyph x={6} y={12} color="#111">T</Glyph></g>],
  ["Globo", <g><circle cx="9" cy="8" r="6.500" fill="#a5c8e6" stroke={BLUE} /><path d="M8 14L13 17V13" fill="#a5c8e6" stroke={BLUE} /><Glyph x={6} y={11} color="#0a820a">T</Glyph></g>],
  ["Segmento", <g><circle cx="4" cy="14" r="2" /><circle cx="14" cy="4" r="2" /><path d="M5.500 12.500L12.500 5.500" /></g>],
  ["Rayo verde", <Ray color="#28aa28" />],
  ["Rayo rojo", <Ray color="#f01414" />],
  ["Regla", <g stroke="#666"><path d="M1 13L12 2L17 6L6 17Z" fill="#b4c3cb" /><path d="M4 11L6 13M7 8L9 10M10 5L12 7" /></g>],
  ["Canal", <g><path d="M0 1H18V9H0Z" fill="#82be96" stroke="none" /><path d="M0 9H18V17H0Z" fill="#b496a0" stroke="none" /><path d="M1 13L5 6L9 11L16 3" stroke="#c8c8ff" strokeWidth="1.500" /></g>],
  ["Elipse roja", <Oval color="#f01e1e" />],
  ["Elipse marrón", <Oval color="#8c5a28" />],
  ["Elipse verde", <Oval color="#0f820f" />],
  ["Elipse lima", <Oval color="#14e614" />],
  ["Línea negra", <Slash color="#111" />],
  ["Línea verde", <Slash color="#28aa28" />],
  ["Línea roja", <Slash color="#f01414" />],
  ["Horizontal negra", <Dash color="#222" width={1} />],
  ["Horizontal salmón", <Dash color="#f08c82" />],
  ["Horizontal lima", <Dash color="#14e614" />],
  ["Horizontal verde", <Dash color="#0f820f" />],
  ["Horizontal roja", <Dash color="#f01414" />],
  ["Horizontal azul", <Dash color={BLUE} />],
  ["Horizontal marino", <Dash color={NAVY} />],
  ["Vertical", <path d="M9 1V17" />],
  ["Ángulo", <g><path d="M14 3L2 14H17" stroke="#d25050" /><path d="M8 8Q11 10 10 14" stroke="#0000e6" strokeWidth="2" /><Glyph x={12} y={10} color="#0000e6" size={8}>α</Glyph></g>],
  ["Ciclo", <g><circle cx="9" cy="10" r="5.500" stroke="#e1823c" /><Plus x={9} y={10} /><Plus x={13} y={4} /></g>],
  ["Ondas 5", <g><path d="M3 7L6 13L10 6L13 12L15 4" stroke={BLUE} /><Plus x={3} y={5} /><Plus x={6} y={14} /><Plus x={10} y={6} /><Plus x={13} y={13} /><Plus x={15} y={3} /></g>],
  ["Ondas abc", <g><path d="M3 12L9 5L14 14" stroke={BLUE} /><Plus x={4} y={12} /><Plus x={9} y={4} /><Plus x={15} y={15} /><Glyph x={11} y={7} color="#0000e6" size={7}>b</Glyph></g>],
  ["Correcto", <path d="M2 9L5 7L7.500 11L15 2L16 4L8 16.500Z" fill="#32c832" stroke="#148c14" />],
  ["Me gusta", <path d="M2 8H5V16H2ZM6 9L9 6V2Q12 1 11.500 7H16V10L14.500 16H6Z" fill="#32c832" stroke="#148c14" />],
  ["Incorrecto", <path d="M4 2L9 6.500L14 2L17 5L12 9.500L17 14L14 17L9 12.500L4 17L1 14L6 9.500L1 5Z" fill="#f01414" stroke="#b40000" />],
  ["Aviso", <g><path d="M9 2L17 16H1Z" fill="#ffbe28" stroke="#c87814" strokeLinejoin="round" /><path d="M9 6.500V11.500M9 13V15" strokeWidth="2" /></g>],
  ["Subida", <path d="M9 2L14 8H11V16H7V8H4Z" fill="#28aa28" stroke="#147814" />],
];

const ChartIcon = () => (
  <Svg size={16}>
    <path d="M4 7V15M9 4V13M14 2V12" stroke="#1e6e1e" />
    <path d="M3 9h2v5h-2zM8 6h2v5h-2zM13 3h2v6h-2z" fill="#1e8c1e" stroke="#1e6e1e" />
  </Svg>
);

const Swap = () => (
  <Svg size={15} strokeWidth="3">
    <path d="M10 2C5 2 5 5 5 8" stroke="#f04646" />
    <path d="M0 7H10L5 13Z" fill="#f04646" stroke="none" />
    <path d="M8 16C13 16 13 13 13 10" stroke="#1eaa1e" />
    <path d="M8 11H18L13 5Z" fill="#1eaa1e" stroke="none" />
  </Svg>
);

const BottomIcons = [
  ["Compartir", <g><path d="M14 3L4 9L13 14" stroke="#fff" strokeWidth="2" /><circle cx="14" cy="3" r="2.500" fill="#fff" stroke="#889" /><circle cx="4" cy="9" r="3" fill="#fff" stroke="#889" /><circle cx="12" cy="14" r="2.500" fill="#fff" stroke="#889" /><path d="M12 14H18L15 18Z" fill="#222" stroke="none" /></g>],
  ["Chat", <g><rect x="1" y="1" width="11" height="10" fill="#fff" stroke="#6496dc" /><path d="M4 5H17V14H10L7 17V14H4Z" fill="#1e64d2" stroke="#1450b4" /><path d="M7 9.500H15" stroke="#fff" strokeWidth="2" strokeDasharray="2 1" /></g>],
  ["Informe", <g><rect x="3" y="1" width="12" height="16" fill="#f5f5f5" stroke="#555" /><path d="M5 4H13M5 7H9" /><path d="M10 6L14 9" stroke="#e62828" strokeWidth="3" /><path d="M5 13L9 15" stroke="#28b428" strokeWidth="3" /></g>],
  ["Órdenes", <g><path d="M3 3H10M3 7H10M3 11H10M3 15H10" stroke="#149614" strokeWidth="3" /><path d="M9 5H16M9 9H14M9 13H16" stroke="#dc2828" strokeWidth="3" /></g>],
  ["Ventanas", <g><rect x="1" y="1" width="11" height="9" fill="#e1f0ff" stroke="#2864c8" /><rect x="6" y="7" width="11" height="9" fill="#fff" stroke="#2864c8" strokeWidth="1.500" /><path d="M7 13L10 10L13 14L16 10" stroke="#28a028" /></g>],
];

const RightIcons = [
  ["Deshacer", <g><path d="M6 7H10Q15 8 14 16" stroke="#5a8cd2" strokeWidth="2.500" /><path d="M1 7L8 1V13Z" fill="#5a8cd2" stroke="none" /></g>],
  ["Rehacer", <g><path d="M12 7H8Q3 8 4 16" stroke="#78a5dc" strokeWidth="2.500" /><path d="M17 7L10 1V13Z" fill="#78a5dc" stroke="none" /></g>],
  ["Propiedades", <g><path d="M2 9H8V16H2Z" fill="#e64646" stroke="#b41e1e" /><path d="M11 1H16V14H11Z" fill="#32c850" stroke="#148c28" /><path d="M3 15L10 8M9 4V8H14" stroke="#fff" strokeWidth="3" /><path d="M3 15L10 8M9 4V8H14" stroke="#222" /></g>],
  ["Ajustar", <g><Lens /><path d="M16 1V10M1 16H10" stroke="#0000e6" strokeWidth="2" /></g>],
  ["Alejar", <g><Lens /><path d="M4.500 7H9.500" stroke="#0000e6" strokeWidth="2" /></g>],
  ["Acercar", <g><Lens /><path d="M4.500 7H9.500M7 4.500V9.500" stroke="#0000e6" strokeWidth="2" /></g>],
];

/* ---------- pieces ---------- */

const AxisLabels = ({ top, height, items }) => (
  <Axis>
    {items.map(([text, y, color, boxed, big], i) => (
      <Tick
        key={i}
        $color={color}
        $boxed={boxed}
        $big={big}
        style={{ top: `${((y - top) / height) * 100}%` }}
      >
        <span>{text}</span>
      </Tick>
    ))}
  </Axis>
);

const Dropdown = ({ label, value }) => (
  <Picker>
    <select aria-label={label}>
      <option>{value}</option>
    </select>
    <Chevron />
  </Picker>
);

const PRICE_AXIS = [
  ["50.000", 54, null, false, true],
  ["45.000", 129],
  ["40.000", 204],
  ["35.000", 280],
  ["30.000", 355],
  ["25.000", 430],
  ["20.000", 505],
  ["15.000", 581],
  ["10.000", 656],
  ["45.367,7", 125, "#00b400", true],
  ["43.868,5", 146, "#960000", true],
  ["39.431,6", 213, NAVY, true],
];

const TRAIN_AXIS = [
  ["60", 711],
  ["40", 727],
  ["100", 682, "#000", true],
  ["93,323", 686, "#e62828", true],
  ["80", 697, "#222", true],
  ["50", 719, NAVY, true],
  ["20", 744, "#222", true],
  ["0", 757, "#222", true],
];

const WILLY_AXIS = [
  ["-40", 800],
  ["-60", 816],
  ["-6,2428", 776, "#00b400", true],
  ["-25", 789, NAVY, true],
  ["-50", 808, NAVY, true],
  ["-75", 827, "#dc1e1e", true],
  ["-100", 843, "#222", true],
];

const AWESOME_AXIS = [
  ["6.336,9", 857, "#5adc5a", true],
  ["6.336,9", 864, "#5adc5a", true],
  ["4.714,2", 875, "#00003c", true],
  ["4.714,2", 881, "#1414ff", true],
  ["2.000", 894],
  ["-2.000", 923],
  ["0", 903, "#1414ff", true],
  ["0", 909, "#1414ff", true],
  ["0", 916, "#1414ff", true],
];

const FORCE_AXIS = [
  ["10", 947],
  ["5,6291", 968, "#f01e1e", true],
  ["0,5000", 988, "#222", true],
];

const CONTROL = "linear-gradient(90deg,#000 0 1px,#0c0 1px 3px,#fff 3px 4px,#00f 4px 5px,#f0f 5px 6px,#c00 6px)";

const App = () => (
  <Page>
    <GlobalStyle />
    <TopBar>
      <Group>
        <Bare aria-label="Gráfico"><ChartIcon /></Bare>
      </Group>
      <Group>
        <Bare aria-label="Vincular">
          <Svg size={9} stroke="#777" strokeWidth="2">
            <path d="M2 1H7V7H2ZM11 1H16V7H11ZM2 11H7V17H2ZM11 11H16V17H11Z" />
          </Svg>
        </Bare>
      </Group>
      <Group>
        <Dropdown label="Valor" value="DOW" />
      </Group>
      <Group $gap={2}>
        {["12s", "144s", "1m", "12m", "56m", "1h", "4h", "D", "W", "M", "Q"].map((t) => (
          <ToolButton key={t} $active={t === "M"}>{t}</ToolButton>
        ))}
      </Group>
      <Group>
        <Dropdown label="Periodo" value="1 mes" />
      </Group>
      <Group $gap={2}>
        {["5kU", "10kU", "35kU"].map((t) => (
          <ToolButton key={t} $active={t === "10kU"}>{t}</ToolButton>
        ))}
      </Group>
      <Group>
        <Dropdown label="Unidades" value="10 k unidades" />
      </Group>
      <Group $gap={3}>
        <Svg size={17}>
          <path d="M1 7Q5 0 9 7T17 4" stroke="#28a028" strokeWidth="1.500" />
          <path d="M1 3Q5 11 9 5T17 9" stroke="#e63c3c" strokeWidth="1.500" />
          <path d="M1 12H5V17H1ZM8 14H11V17H8ZM14 12H17V17H14Z" stroke="none" fill="#14a014" />
          <path d="M5 12H8V15H5ZM11 13H14V17H11Z" fill="#e61e1e" stroke="none" />
        </Svg>
        <Dropdown label="Indicadores" value="Indicadores" />
      </Group>
      <Info>
        <Svg size={12} stroke="#778">
          <rect x="1" y="1" width="16" height="16" fill="#e6e6e6" />
          <path d="M9 3V6M9 8V15" stroke="#666" strokeWidth="2.500" />
        </Svg>
        <Svg size={14} stroke="#777">
          <circle cx="9" cy="9" r="4" fill="#888" />
        </Svg>
        <Badge>-0,58 %</Badge>
        <strong>14 nov 2025</strong>
        <span>Wall Street Cash (1€)</span>
      </Info>
      <Spacer />
      <Group $pad={2}>
        <Bare aria-label="Actualizar"><Swap /></Bare>
      </Group>
      <WindowButtons>
        <Bare aria-label="Minimizar"><Svg size={9} stroke="#6d828c" strokeWidth="3"><path d="M1 15H17" /></Svg></Bare>
        <Bare aria-label="Restaurar"><Svg size={9} stroke="#6d828c" strokeWidth="2.500"><path d="M6 6V2H16V11H12M2 7H11V16H2Z" /></Svg></Bare>
        <Bare aria-label="Cerrar"><Svg size={9} stroke="#6d828c" strokeWidth="3"><path d="M1 1L17 17M17 1L1 17" /></Svg></Bare>
      </WindowButtons>
    </TopBar>

    <Body>
      <Side>
        <SideArrow aria-label="Subir"><Chevron up color="#718a96" /></SideArrow>
        <SideTools>
          {SIDE_ICONS.map(([name, icon], i) => (
            <SideButton key={name} aria-label={name} $active={i === 0}>
              <Svg size={17}>{icon}</Svg>
            </SideButton>
          ))}
          <SideButton aria-label="Bajada">
            <Svg><path d="M9 16L14 10H11V1H7V10H4Z" fill="#f01414" stroke="#b40000" /></Svg>
          </SideButton>
        </SideTools>
        <SideArrow $lower aria-label="Bajar"><Chevron /></SideArrow>
        <SideFoot>
          <Bare aria-label="Herramientas">
            <Svg size={20}>
              <rect x="4" y="3" width="10" height="11" fill="#f0f0f0" stroke="#888" />
              <circle cx="4" cy="4" r="3.500" fill="#148c14" stroke="#148c14" />
              <Glyph x={2} y={7} color="#fff" size={7}>1</Glyph>
              <path d="M6 7L15 15M12 9L10 12L16 16" stroke="#333" />
              <path d="M5 11L8 8" stroke="#e62828" />
            </Svg>
          </Bare>
          <Bare aria-label="Más">
            <Svg size={16} fill="#222" stroke="none">
              <circle cx="3" cy="8" r="1.700" /><circle cx="9" cy="8" r="1.700" /><circle cx="15" cy="8" r="1.700" />
              <path d="M11 14H18L14.500 18Z" />
            </Svg>
          </Bare>
        </SideFoot>
      </Side>

      <Charts>
        <Panel>
          <PriceChart />
          <AxisLabels top={23} height={649} items={PRICE_AXIS} />
          <Legend>
            <LegendTab aria-label="Ordenar" $pad={2}>
              <Svg size={11}><rect x="0" y="0" width="18" height="18" fill="#fff" stroke="#aaa" /><path d="M7 2H11V8H15L9 15L3 8H7Z" fill="#e62828" stroke="none" /></Svg>
              <Svg size={11}><rect x="0" y="0" width="18" height="18" fill="#fff" stroke="#aaa" /><path d="M7 16H11V10H15L9 3L3 10H7Z" fill="#28b428" stroke="none" /></Svg>
            </LegendTab>
            <LegendTab $pad={3}><Swatch />Precio</LegendTab>
            <LegendTab aria-label="Lista" $pad={3}>
              <Svg size={10} strokeWidth="2"><path d="M1 3H4M6 3H17M1 9H4M6 9H17M1 15H4M6 15H17" /></Svg>
            </LegendTab>
            <LegendTab $pad={3}><Swatch />Cierre (W)</LegendTab>
            <LegendTab><Swatch $fill="#718a96" />Tunel Domenec v4 (t t t t t)</LegendTab>
            <LegendTab><Swatch $fill={CONTROL} $edge="transparent" />Control Total Doc v.6</LegendTab>
            <LegendTab><Swatch $fill="#000" $edge="#000" />Multi Avisos (3 f 3 1,5 70 f f)</LegendTab>
            <LegendTab><Swatch />DS_CotasHist (1 t t t 3 1 1 t f f f f f f f ...)</LegendTab>
          </Legend>
          <Title>
            M<br />
            Wall Street Cash (1€)
          </Title>
          <Credit>IT-Finance.com - Tiempo Real</Credit>
        </Panel>
        <Panel>
          <TrainChart />
          <AxisLabels top={673} height={90} items={TRAIN_AXIS} />
          <Legend $height={16}>
            <LegendTab $pad={2}><Swatch $fill="linear-gradient(90deg,#718a96 50%,#000 50%)" />Sistema de trenes Doc v4 (f f)</LegendTab>
          </Legend>
        </Panel>
        <Panel>
          <WillyChart />
          <AxisLabels top={764} height={86} items={WILLY_AXIS} />
          <Legend $height={16}>
            <LegendTab $pad={3}><Swatch $fill="#718a96" />Willy Doc (t)</LegendTab>
          </Legend>
        </Panel>
        <Panel>
          <AwesomeChart />
          <AxisLabels top={851} height={86} items={AWESOME_AXIS} />
          <Legend $height={16}>
            <LegendTab $pad={3}><Swatch $fill="#718a96" />Awesome Evolution Doc</LegendTab>
          </Legend>
        </Panel>
        <Panel>
          <ForceChart />
          <AxisLabels top={938} height={57} items={FORCE_AXIS} />
          <Legend $height={16}>
            <LegendTab $pad={2}><Swatch $fill="linear-gradient(90deg,#000 50%,#718a96 50%)" />Barra Fuerza Fondo Mercado v4 (f)</LegendTab>
          </Legend>
        </Panel>
        <Years>
          {YEARS.map((year) => (
            <span key={year} style={{ left: `${((yearX(year) - 28) / 1846) * 100}%` }}>
              {year}
            </span>
          ))}
        </Years>
      </Charts>
    </Body>

    <BottomBar>
      <Bare aria-label="Dibujar">
        <Svg>
          <path d="M2 2L8 16M5 16L8 3L11 12" stroke="#555" />
          <path d="M2 6V12" stroke="#e62828" strokeWidth="2" />
          <path d="M9 15L10 11L15 3L17 5L12 13Z" fill="#ffd728" stroke="#8c6e14" />
        </Svg>
      </Bare>
      {BottomIcons.map(([name, icon]) => (
        <Bare key={name} aria-label={name}><Svg size={15}>{icon}</Svg></Bare>
      ))}
      <Bare aria-label="Contraer">
        <Svg size={8} strokeWidth="2" stroke="#444"><path d="M8 2L2 9L8 16M16 2L10 9L16 16" /></Svg>
      </Bare>
      <Scroller>
        <Bare aria-label="Izquierda"><Chevron left /></Bare>
        <Track />
        <Thumb />
        <Bare aria-label="Derecha"><Chevron right /></Bare>
      </Scroller>
      {RightIcons.map(([name, icon]) => (
        <Bare key={name} aria-label={name}><Svg size={16}>{icon}</Svg></Bare>
      ))}
      <Bare aria-label="Bajar gráfico">
        <Svg size={11}><path d="M0 3H18" stroke="#333" strokeWidth="4" strokeDasharray="3 1" /><path d="M9 8V16M5 12L9 16L13 12" stroke="#1464dc" strokeWidth="2.500" /></Svg>
      </Bare>
    </BottomBar>
  </Page>
);

export default App;
